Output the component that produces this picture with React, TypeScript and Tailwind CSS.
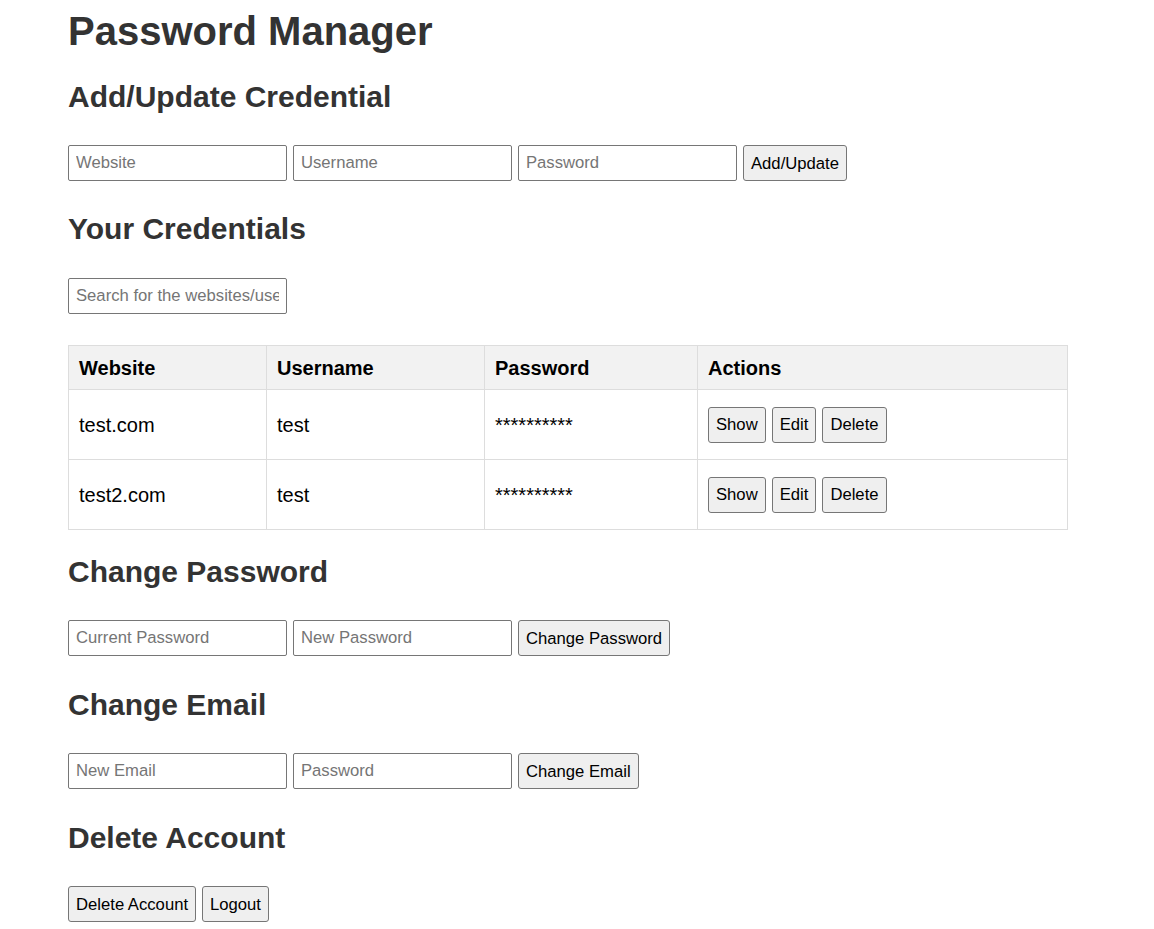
const inputCls =
  "h-[36px] w-[219px] rounded-[2px] border border-[#767676] bg-white px-[7px] text-[16.67px] text-black placeholder:text-[#757575] outline-none"

const btnCls =
  "h-[36px] rounded-[3px] border border-[#767676] bg-[#efefef] px-[7px] text-[16.67px] text-black"

const credentials = [
  { site: "test.com", user: "test" },
  { site: "test2.com", user: "test" },
]

function Heading({ children, className = "" }: { children: React.ReactNode; className?: string }) {
  return <h2 className={`text-[30px] font-bold leading-[35px] ${className}`}>{children}</h2>
}

export default function App() {
  return (
    <div className="min-h-screen bg-white">
      <div className="ml-[68px] w-[1000px] pt-[8px] font-['Liberation_Sans',Arial,sans-serif] text-[#333]">
        <h1 className="text-[40px] font-bold leading-[46px]">Password Manager</h1>

        <Heading className="mt-[25px]">Add/Update Credential</Heading>
        <div className="mt-[31px] flex gap-[6px]">
          <input className={inputCls} placeholder="Website" />
          <input className={inputCls} placeholder="Username" />
          <input className={inputCls} type="password" placeholder="Password" />
          <button className={btnCls}>Add/Update</button>
        </div>

        <Heading className="mt-[30px]">Your Credentials</Heading>
        <div className="mt-[32px]">
          <input className={inputCls} placeholder="Search for the websites/usernames" />
        </div>

        {/* credentials table */}
        <table className="mt-[31px] w-[1000px] table-fixed border-collapse text-[20px] leading-[22px] text-black">
          <thead>
            <tr className="bg-[#f2f2f2]">
              <th className="h-[44px] w-[198px] border border-[#ddd] pl-[10px] text-left font-bold">Website</th>
              <th className="w-[218px] border border-[#ddd] pl-[10px] text-left font-bold">Username</th>
              <th className="w-[213px] border border-[#ddd] pl-[10px] text-left font-bold">Password</th>
              <th className="border border-[#ddd] pl-[10px] text-left font-bold">Actions</th>
            </tr>
          </thead>
          <tbody>
            {credentials.map((c) => (
              <tr key={c.site}>
                <td className="h-[70px] border border-[#ddd] pl-[10px]">{c.site}</td>
                <td className="border border-[#ddd] pl-[10px]">{c.user}</td>
                <td className="border border-[#ddd] pl-[10px]">**********</td>
                <td className="border border-[#ddd] pl-[10px]">
                  <div className="flex gap-[6px]">
                    <button className={btnCls}>Show</button>
                    <button className={btnCls}>Edit</button>
                    <button className={btnCls}>Delete</button>
                  </div>
                </td>
              </tr>
            ))}
          </tbody>
        </table>

        <Heading className="mt-[24px]">Change Password</Heading>
        <div className="mt-[31px] flex gap-[6px]">
          <input className={inputCls} type="password" placeholder="Current Password" />
          <input className={inputCls} type="password" placeholder="New Password" />
          <button className={btnCls}>Change Password</button>
        </div>

        <Heading className="mt-[31px]">Change Email</Heading>
        <div className="mt-[31px] flex gap-[6px]">
          <input className={inputCls} placeholder="New Email" />
          <input className={inputCls} type="password" placeholder="Password" />
          <button className={btnCls}>Change Email</button>
        </div>

        <Heading className="mt-[31px]">Delete Account</Heading>
        <div className="mt-[31px] flex gap-[6px]">
          <button className={btnCls}>Delete Account</button>
          <button className={btnCls}>Logout</button>
        </div>
      </div>
    </div>
  )
}
